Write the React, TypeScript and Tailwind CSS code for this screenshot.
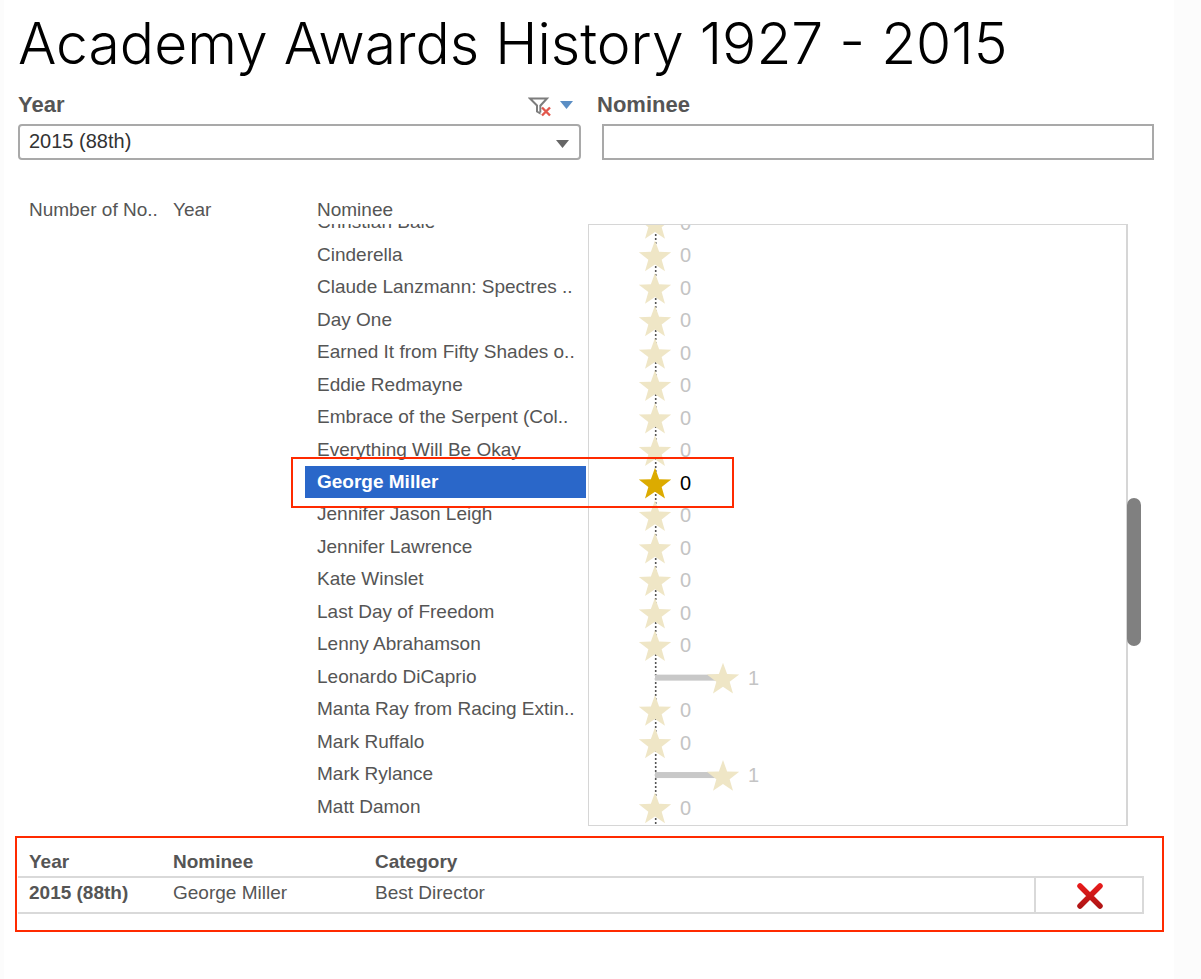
import { useState } from "react";

const nominees = [
  { name: "Christian Bale", wins: 0 },
  { name: "Cinderella", wins: 0 },
  { name: "Claude Lanzmann: Spectres ..", wins: 0 },
  { name: "Day One", wins: 0 },
  { name: "Earned It from Fifty Shades o..", wins: 0 },
  { name: "Eddie Redmayne", wins: 0 },
  { name: "Embrace of the Serpent (Col..", wins: 0 },
  { name: "Everything Will Be Okay", wins: 0 },
  { name: "George Miller", wins: 0 },
  { name: "Jennifer Jason Leigh", wins: 0 },
  { name: "Jennifer Lawrence", wins: 0 },
  { name: "Kate Winslet", wins: 0 },
  { name: "Last Day of Freedom", wins: 0 },
  { name: "Lenny Abrahamson", wins: 0 },
  { name: "Leonardo DiCaprio", wins: 1 },
  { name: "Manta Ray from Racing Extin..", wins: 0 },
  { name: "Mark Ruffalo", wins: 0 },
  { name: "Mark Rylance", wins: 1 },
  { name: "Matt Damon", wins: 0 },
];

const CHART_HEIGHT = 617;
const ROW = CHART_HEIGHT / nominees.length;
const AXIS_X = 66;
const WIN_WIDTH = 68;

// five pointed star around 0,0
const STAR = Array.from({ length: 10 }, (_, i) => {
  const r = i % 2 === 0 ? 17 : 7;
  const a = (Math.PI / 5) * i - Math.PI / 2;
  return `${(r * Math.cos(a)).toFixed(2)},${(r * Math.sin(a)).toFixed(2)}`;
}).join(" ");

function FilterClearIcon() {
  return (
    <svg width="24" height="22" viewBox="0 0 24 22" fill="none" aria-hidden="true">
      <path d="M2 2.5H19L12.5 9.5V17.5L9 15.5V9.5Z" stroke="#7d7d7d" strokeWidth="2" />
      <path d="M12.5 10H24V22H12.5Z" fill="#fff" />
      <path d="M12.5 9V16.5" stroke="#7d7d7d" strokeWidth="1.6" />
      <path d="M14 11.5L22 19.5M22 11.5L14 19.5" stroke="#e2574c" strokeWidth="2.4" />
    </svg>
  );
}

function WinsChart({ selected }: { selected: string }) {
  return (
    <svg width="100%" height={CHART_HEIGHT + 4} role="img" aria-label="Wins per nominee" className="block">
      <line x1={AXIS_X + 0.7} x2={AXIS_X + 0.7} y1="0" y2={CHART_HEIGHT + 4} stroke="#555" strokeWidth="1.6" strokeDasharray="2 2" />
      {nominees.map((n, i) => {
        const active = n.name === selected;
        const x = AXIS_X + n.wins * WIN_WIDTH;
        const y = i * ROW;
        return (
          <g key={n.name}>
            {n.wins > 0 && <rect x={AXIS_X} y={y + 14} width={x - AXIS_X} height="6" fill="#c8c8c8" />}
            <polygon points={STAR} transform={`translate(${x} ${y + 19})`} fill={active ? "#dcab00" : "#efe6c6"} />
            <text x={x + 25} y={y + 24} fontSize="20" fill={active ? "#000" : "#c4c4c4"}>
              {n.wins}
            </text>
          </g>
        );
      })}
    </svg>
  );
}

export default function App() {
  const [year, setYear] = useState("2015 (88th)");
  const [query, setQuery] = useState("");
  const [selected, setSelected] = useState("George Miller");

  return (
    <div className="min-h-screen bg-[#fcfcfc] pl-1 pr-[27px] flex font-['Liberation_Sans',Arial,sans-serif] text-[19px] leading-6 text-[#555]">
      <main className="flex-1 min-w-0 bg-white pt-1">
        <h1 className="pl-[14px] h-[84px] leading-[80px] text-[57px] font-light text-black whitespace-nowrap font-['Inter',sans-serif]">
          Academy Awards History 1927 - 2015
        </h1>

        {/* Filters */}
        <div className="flex gap-4 pl-[14px] pr-5">
          <div className="flex-[563]">
            <div className="flex items-center justify-between h-9 pb-0.5 pr-2">
              <label htmlFor="year" className="font-bold text-[22px]">Year</label>
              <div className="flex items-center gap-2">
                <button aria-label="Clear filter" className="mt-1">
                  <FilterClearIcon />
                </button>
                <button aria-label="Filter options">
                  <svg width="13" height="8" viewBox="0 0 13 8" aria-hidden="true">
                    <path d="M0 0H13L6.5 8Z" fill="#5b8ec4" />
                  </svg>
                </button>
              </div>
            </div>
            <div className="relative">
              <select
                id="year"
                value={year}
                onChange={(e) => setYear(e.target.value)}
                className="block w-full h-9 appearance-none rounded border-2 border-[#a9a9a9] bg-white pl-[9px] pb-0.5 text-xl text-[#333]"
              >
                <option>2015 (88th)</option>
              </select>
              <svg width="13" height="8" viewBox="0 0 13 8" className="absolute right-3 top-4 pointer-events-none" aria-hidden="true">
                <path d="M0 0H13L6.5 8Z" fill="#666" />
              </svg>
            </div>
          </div>
          <div className="flex-[557]">
            <label htmlFor="nominee" className="flex items-center h-9 pb-0.5 font-bold text-[22px]">Nominee</label>
            <div className="pl-[5px]">
              <input
                id="nominee"
                type="text"
                value={query}
                onChange={(e) => setQuery(e.target.value)}
                className="block w-full h-9 border-2 border-[#a9a9a9] bg-white px-2 text-xl text-[#333]"
              />
            </div>
          </div>
        </div>

        {/* Column headings */}
        <div className="flex pl-[25px] pt-[38px] h-16">
          <span className="w-36">Number of No..</span>
          <span className="w-36">Year</span>
          <span>Nominee</span>
        </div>

        {/* Nominees and their wins */}
        <div className="relative mr-[46px]">
          <div className="flex h-[602px] overflow-hidden">
            <ul className="ml-[301px] w-[281px] mr-0.5 h-[617px] -mt-[18px] flex flex-col shrink-0">
              {nominees.map((n) => (
                <li key={n.name} className="flex-1 flex">
                  <button
                    onClick={() => setSelected(n.name)}
                    className={
                      n.name === selected
                        ? "w-full pl-3 text-left whitespace-nowrap bg-[#2a67c9] text-white font-bold"
                        : "w-full pl-3 text-left whitespace-nowrap"
                    }
                  >
                    {n.name}
                  </button>
                </li>
              ))}
            </ul>
            <div className="flex-1 border border-r-2 border-[#d6d6d6] overflow-hidden">
              <div className="-mt-[19px]">
                <WinsChart selected={selected} />
              </div>
            </div>
          </div>
          {/* Callout around the selected row */}
          <div className="absolute left-[287px] top-[233px] w-[443px] h-[51px] border-2 border-[#ff2a00] pointer-events-none" />
          {/* Scroll thumb */}
          <div className="absolute -right-[13px] top-[274px] w-[14px] h-[148px] rounded-full bg-[#808080]" />
        </div>

        {/* Details of the selected nominee */}
        <section className="mt-[10px] ml-[11px] mr-[10px] border-2 border-[#ff2a00] pl-px pr-[18px] pb-4">
          <table className="w-full table-fixed border-collapse text-left">
            <thead>
              <tr className="h-[39px] font-bold">
                <th className="w-[144px] pl-[11px] pt-[10px]">Year</th>
                <th className="w-[202px] pl-[11px] pt-[10px]">Nominee</th>
                <th className="pl-[11px] pt-[10px]">Category</th>
                <th className="w-[108px]" aria-label="Won"></th>
              </tr>
            </thead>
            <tbody>
              <tr className="h-9 border-y-2 border-[#d9d9d9]">
                <th className="pl-[11px] pb-1">2015 (88th)</th>
                <td className="pl-[11px] pb-1">George Miller</td>
                <td className="pl-[11px] pb-1">Best Director</td>
                <td className="border-x-2 border-[#d9d9d9] pt-0.5 pl-0.5">
                  <svg width="28" height="28" viewBox="0 0 28 28" className="mx-auto" role="img" aria-label="Did not win">
                    <defs>
                      <linearGradient id="lost" x1="0" y1="0" x2="0" y2="28" gradientUnits="userSpaceOnUse">
                        <stop offset="0" stopColor="#ee1c1c" />
                        <stop offset="1" stopColor="#a81414" />
                      </linearGradient>
                    </defs>
                    <path d="M4 4L24 24M24 4L4 24" stroke="url(#lost)" strokeWidth="5.5" strokeLinecap="round" />
                  </svg>
                </td>
              </tr>
            </tbody>
          </table>
        </section>
      </main>
    </div>
  );
}
